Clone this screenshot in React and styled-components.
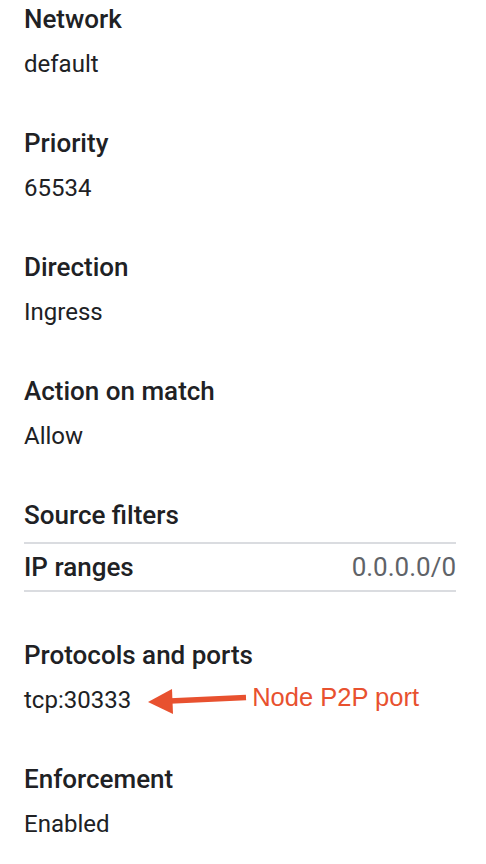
import React from 'react';
import styled, { createGlobalStyle } from 'styled-components';

const GlobalStyle = createGlobalStyle`
  body {
    margin: 0;
    background: #ffffff;
    font-family: Roboto, 'Noto Sans', sans-serif;
    color: #202124;
  }
`;

const Page = styled.div`
  width: 486px;
  height: 864px;
  box-sizing: border-box;
  padding: 0 30px 0 24px;
  overflow: hidden;
`;

const Section = styled.section`
  margin-bottom: ${(p) => p.$gap ?? 41}px;
`;

const Heading = styled.h2`
  margin: 0;
  font-size: 26px;
  font-weight: 500;
  line-height: 38px;
  color: #202124;
`;

const Value = styled.div`
  margin-top: 7px;
  font-size: 24px;
  line-height: 38px;
  color: #202124;
  display: flex;
  align-items: center;
`;

const Table = styled.div`
  margin-top: 8px;
  border-top: 2px solid #dadce0;
`;

const TableRow = styled.div`
  display: flex;
  justify-content: space-between;
  align-items: center;
  height: 46px;
  border-bottom: 2px solid #dadce0;
  font-size: 26px;
`;

const RowLabel = styled.span`
  font-weight: 500;
  color: #202124;
`;

const RowValue = styled.span`
  color: #5f6368;
`;

const Arrow = styled.svg`
  margin-left: 17px;
  flex-shrink: 0;
`;

const Note = styled.span`
  margin-left: 5px;
  font-family: 'Liberation Sans', Arial, sans-serif;
  font-size: 25.5px;
  color: #e8512f;
  position: relative;
  top: -3px;
`;

const fields = [
  { label: 'Network', value: 'default' },
  { label: 'Priority', value: '65534' },
  { label: 'Direction', value: 'Ingress' },
  { label: 'Action on match', value: 'Allow' },
];

export default function App() {
  return (
    <Page>
      <GlobalStyle />
      {fields.map((f) => (
        <Section key={f.label}>
          <Heading>{f.label}</Heading>
          <Value>{f.value}</Value>
        </Section>
      ))}
      <Section $gap={44}>
        <Heading>Source filters</Heading>
        <Table>
          <TableRow>
            <RowLabel>IP ranges</RowLabel>
            <RowValue>0.0.0.0/0</RowValue>
          </TableRow>
        </Table>
      </Section>
      <Section>
        <Heading>Protocols and ports</Heading>
        <Value>
          tcp:30333
          <Arrow width="99" height="28" viewBox="0 0 99 28">
            <path d="M22 15 L98 11.5" stroke="#e8512f" strokeWidth="5.5" fill="none" />
            <polygon points="0,16 24,3 25,28" fill="#e8512f" />
          </Arrow>
          <Note>Node P2P port</Note>
        </Value>
      </Section>
      <Section>
        <Heading>Enforcement</Heading>
        <Value>Enabled</Value>
      </Section>
    </Page>
  );
}
